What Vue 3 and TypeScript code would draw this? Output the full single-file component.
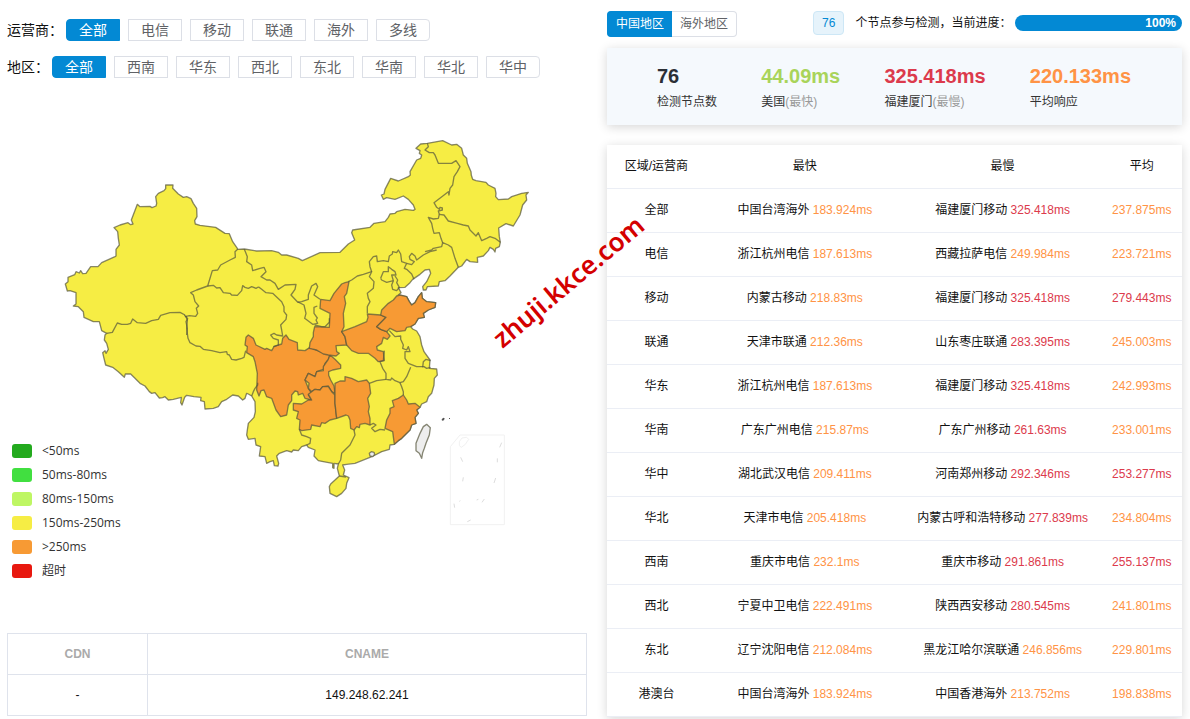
<script setup lang="ts">
import { ref } from 'vue'

type Point = [number, number]
interface Row { area: string; fast: string; fastMs: string; slow: string; slowMs: string; avg: string }

const carriers = ['全部', '电信', '移动', '联通', '海外', '多线']
const areas = ['全部', '西南', '华东', '西北', '东北', '华南', '华北', '华中']
const carrier = ref('全部')
const area = ref('全部')
const scope = ref('中国地区')

const stats = [
  { value: '76', label: '检测节点数', note: '', tone: 'dark' },
  { value: '44.09ms', label: '美国', note: '(最快)', tone: 'green' },
  { value: '325.418ms', label: '福建厦门', note: '(最慢)', tone: 'red' },
  { value: '220.133ms', label: '平均响应', note: '', tone: 'orange' },
]

const legend = [
  { label: '<50ms', level: 'l1' },
  { label: '50ms-80ms', level: 'l2' },
  { label: '80ms-150ms', level: 'l3' },
  { label: '150ms-250ms', level: 'l4' },
  { label: '>250ms', level: 'l5' },
  { label: '超时', level: 'l6' },
]

const rows: Row[] = [
  { area: '全部', fast: '中国台湾海外', fastMs: '183.924', slow: '福建厦门移动', slowMs: '325.418', avg: '237.875' },
  { area: '电信', fast: '浙江杭州电信', fastMs: '187.613', slow: '西藏拉萨电信', slowMs: '249.984', avg: '223.721' },
  { area: '移动', fast: '内蒙古移动', fastMs: '218.83', slow: '福建厦门移动', slowMs: '325.418', avg: '279.443' },
  { area: '联通', fast: '天津市联通', fastMs: '212.36', slow: '山东枣庄联通', slowMs: '283.395', avg: '245.003' },
  { area: '华东', fast: '浙江杭州电信', fastMs: '187.613', slow: '福建厦门移动', slowMs: '325.418', avg: '242.993' },
  { area: '华南', fast: '广东广州电信', fastMs: '215.87', slow: '广东广州移动', slowMs: '261.63', avg: '233.001' },
  { area: '华中', fast: '湖北武汉电信', fastMs: '209.411', slow: '河南郑州移动', slowMs: '292.346', avg: '253.277' },
  { area: '华北', fast: '天津市电信', fastMs: '205.418', slow: '内蒙古呼和浩特移动', slowMs: '277.839', avg: '234.804' },
  { area: '西南', fast: '重庆市电信', fastMs: '232.1', slow: '重庆市移动', slowMs: '291.861', avg: '255.137' },
  { area: '西北', fast: '宁夏中卫电信', fastMs: '222.491', slow: '陕西西安移动', slowMs: '280.545', avg: '241.801' },
  { area: '东北', fast: '辽宁沈阳电信', fastMs: '212.084', slow: '黑龙江哈尔滨联通', slowMs: '246.856', avg: '229.801' },
  { area: '港澳台', fast: '中国台湾海外', fastMs: '183.924', slow: '中国香港海外', slowMs: '213.752', avg: '198.838' },
]
const tone = (ms: string) => (Number(ms) > 250 ? 'red' : 'orange')

// Each map sheet has its own origin; outlines are stored relative to it.
const sheets: Record<string, Point> = {
  nw: [150, 510], mid: [690, 690], ne: [1110, 390], sw: [270, 930], se: [720, 990],
}
const on = (sheet: string, pts: string) =>
  pts.split(' ').map((p) => {
    const [x, y] = p.split(',').map(Number)
    return `${x + sheets[sheet][0]},${y + sheets[sheet][1]}`
  }).join(' ')

const outline = [
  on('nw', '46,342 54,335 54,322 74,314 78,305 88,309 92,302 98,311 108,310 122,290 144,290 155,278 195,260 198,258 198,238 208,225 205,205 203,185 192,173 210,165 234,158 242,164 249,162 244,150 262,103 270,110 300,109 306,113 318,108 320,100 317,80 325,70 342,62 347,56 347,45 369,45 368,55 385,72 400,82 410,80 423,86 430,100 440,115 441,140 434,152 436,162 450,166 497,172 525,190 538,191 548,215 562,235 563,238 583,237'),
  on('mid', '80,63 125,62 145,67 155,75 170,75 205,85 217,92 270,68 330,67 355,42 374,30 365,8 368,0'),
  on('ne', '0,292 12,280 45,275 55,262 60,252 75,250 80,245 105,238 130,241 135,238 130,225 115,208 100,198 75,208 50,203 40,208 34,195 42,192 45,178 62,145 85,153 115,140 121,135 120,125 140,90 152,85 155,75 148,70 150,62 138,55 152,42 172,40 218,32 245,45 260,43 275,55 280,75 290,85 292,100 303,125 304,136 308,148 318,152 348,157 355,165 375,175 378,190 377,200 385,209 415,207 425,200 455,190 475,187 468,195 470,210 458,225 450,255 430,288 408,281 386,294 388,320 391,337 388,350 377,355 375,366 370,358 360,352 355,362 340,378 322,382 323,397 300,395 290,388 275,408 265,412 240,438 225,452 208,455 205,468 172,470 168,480'),
  on('mid', '580,180 578,170 590,155 602,130 598,118 585,120 570,133 548,148 540,158 525,172 505,173 513,188 505,195 530,200 538,215 545,225 555,218 565,200 575,188 577,205 590,215 617,218 615,232 595,240 580,250 583,262 565,265 555,282 542,290 548,297 560,303 570,320 575,345'),
  on('se', '552,65 570,90 568,115 590,117 592,135 583,145 582,165 575,190 565,200 560,215 545,222 540,232 530,240 535,250 525,262 528,280 515,285 510,300 495,315 485,325 475,332 463,343 450,345 448,358 425,365 400,378 390,382 375,388 345,400 320,403 308,405 314,420 310,435 327,443 320,460 318,475 305,490 290,500 270,490 268,470 272,462 298,438 292,415 295,402 282,400 282,415 278,413 278,400 250,395 235,392 222,378 225,360 205,352 200,345 185,350 175,362 160,360 155,366 140,362 118,370 110,378 116,400 114,408 103,407 100,392 90,395 80,400 75,380 58,378 62,350 48,345 45,325 25,328 20,315 22,300 25,280 42,262 46,245 45,215'),
  on('sw', '485,258 475,252 470,250 465,265 458,270 445,258 428,255 410,268 395,275 385,290 370,295 345,297 343,275 332,272 333,262 312,260 290,256 284,262 276,285 272,278 274,262 250,268 235,270 225,260 218,263 208,264 195,248 185,250 178,245 165,228 150,220 135,205 122,192 106,192 103,202 85,185 68,172 47,165 42,145 38,128 45,122 48,130 55,118 50,100 43,90 45,75 50,70'),
  on('nw', '155,482 148,455 130,455 102,442 100,425 85,410 70,408 78,402 78,368 60,362 52,363'),
].join(' ')

const slowProvinces = [
  on('se', '18,22 25,15 40,25 48,45 75,58 80,55 95,62 102,50 115,45 125,42 128,25 138,15 147,28 172,38 173,60 195,62 210,52 240,65 270,75 265,88 255,100 250,118 230,125 225,140 205,130 195,150 205,175 215,190 205,195 215,210 195,205 188,190 175,195 173,185 165,183 155,195 155,212 145,225 140,255 122,260 108,240 95,205 80,200 72,180 63,182 57,198 50,180 52,130 45,95 40,80 20,68 22,50 15,45'),
  on('se', '270,75 285,88 302,105 302,115 278,120 266,125 266,136 272,150 282,168 285,190 275,185 265,168 248,170 240,180 225,178 215,185 205,175 207,160 195,150 205,130 225,140 230,125 250,122 250,110 265,88'),
  on('se', '160,220 185,222 205,210 215,210 205,193 225,178 240,180 248,170 265,170 275,185 285,195 285,220 290,265 270,270 255,280 245,278 240,290 215,285 212,298 185,302 178,298 180,270 170,265 175,245 160,240'),
  on('se', '285,160 300,153 315,153 315,140 335,145 355,155 380,150 388,160 392,190 383,205 388,230 385,245 390,265 390,285 375,280 360,283 358,293 350,290 342,300 332,295 330,270 325,258 318,255 290,265 285,220 285,190'),
  on('mid', '357,155 350,190 343,200 347,220 340,250 342,290 335,305 345,320 350,345 318,347 320,365 328,370 318,378 295,375 280,372 260,360 238,355 240,338 250,320 250,308 254,290 298,292 300,250 270,235 272,208 300,212 312,190 335,162 345,158'),
  on('mid', '412,252 452,255 468,262 455,275 440,290 452,298 470,305 480,318 472,328 460,322 455,340 440,350 442,360 460,365 463,392 445,395 435,385 415,370 385,370 365,362 350,345 345,320 335,305 375,290 410,275 414,262'),
  on('mid', '452,255 455,240 475,220 490,210 500,198 510,195 530,200 538,215 545,225 555,218 565,200 575,188 577,205 590,215 617,218 615,232 595,240 580,250 583,262 565,265 555,282 542,290 530,292 525,302 500,305 480,295 470,305 452,298 440,290 455,275 468,262'),
  on('se', '490,195 500,210 505,222 525,220 540,232 530,240 535,250 525,262 528,280 515,285 510,300 485,325 475,332 463,343 458,305 435,295 440,270 450,250 450,235 462,230 457,212 475,205'),
]

const borders = [
  on('nw', '170,490 187,487 202,459 215,463 232,463 242,460 248,447 262,458 287,460 305,452 325,448 332,436 360,428 390,427 405,435'),
  on('nw', '403,435 408,440 413,446 408,455 412,475 410,495'),
  on('sw', '287,18 292,30 290,55 294,85 300,98 318,108 330,109 340,118 365,122 390,128 410,125 412,133 418,135 425,148 438,150 455,145 462,142 467,122'),
  on('nw', '405,440 418,437 437,439 443,430 439,415 446,408 435,395 430,375 422,368 440,360 473,348 487,302 503,300 512,285 540,270 556,262 555,245 563,238'),
  on('nw', '473,348 490,346 500,354 510,353 520,368 540,370 545,375 562,376 575,362 578,347 585,352 595,355 605,350 618,355 625,351'),
  on('mid', '85,170 95,178 108,188 128,190 155,215 162,230 162,245 170,255 168,268 152,285 155,300 158,318 140,315 132,310 122,315 130,325 145,330 145,345 130,350'),
  on('mid', '43,58 52,80 50,95 65,105 68,122 90,115 102,112 108,125 93,140 110,150 120,150 135,160 145,178 165,165 198,163 195,178 183,195 202,215'),
  on('mid', '202,217 215,215 235,208 235,195 245,168 258,160 263,170 252,195 270,208'),
  on('mid', '202,215 222,225 228,250 224,265 248,283 263,280 258,270 262,264 252,250 252,232 262,228'),
  on('mid', '254,285 275,290 285,290 298,277 298,265'),
  on('mid', '355,155 365,150 382,138 400,133 425,125 418,140 432,155 430,175 412,190 415,205 420,215 412,230 412,250'),
  on('mid', '425,125 420,110 418,95 430,80 440,78 442,95 460,92 475,95 478,78 487,72 488,65 500,68 505,60 512,72 515,95 530,100 523,115 530,118 545,132 552,148'),
  on('mid', '530,100 545,104 553,95 540,88 538,80 545,70 555,78 560,90 580,75 600,65 620,60'),
  on('ne', '165,365 185,360 190,355 215,350 218,338 235,345 245,352 255,385 265,412'),
  on('ne', '218,338 213,325 208,308 192,310 188,295 185,280 175,262 190,267 205,265 208,253 222,255 235,273 262,280 280,285 295,288 300,300 318,318 325,308 335,332 350,325 360,320 375,325 391,337'),
  on('ne', '208,253 205,243 217,240 217,234 210,232 208,238 200,232 192,218 235,185 237,195 240,175 248,165 252,140 262,125 270,110 258,92 245,100 205,100 195,75 190,68 178,68 165,60 175,50 172,40'),
  on('mid', '452,145 460,125 475,125 475,110 485,118 495,125 498,135 485,135 490,152 470,157 455,150 452,145'),
  on('mid', '490,152 485,165 488,178 500,182 508,172 500,158 503,150 495,138'),
  on('mid', '478,302 495,320 512,318 512,328 520,345 518,355 530,360 535,350 540,365 525,365 525,385 535,400 560,410 582,410 590,415 602,412'),
  on('se', '433,62 430,92 420,95 428,115 438,130 438,148 452,150 455,144 465,152 480,158 490,155 500,140 512,112'),
  on('se', '548,112 550,95 558,88 572,92'),
  on('se', '388,160 410,152 438,148'),
  on('se', '480,158 485,170 490,185 490,195'),
  on('se', '390,285 400,280 408,285 395,295 405,305 420,298 435,300'),
  on('se', '342,300 345,315 330,345 305,370 302,390 295,402'),
  on('se', '178,298 185,315 200,320 212,325 210,340 200,345'),
  on('sw', '485,258 490,245 495,235 503,225 503,218'),
  on('se', '298,438 318,441'),
]
const taiwan = on('se', '560,283 571,293 568,315 558,340 553,355 548,368 545,385 538,370 528,362 528,340 540,310 550,290')
</script>

<template>
  <div class="page">
    <section class="left">
      <div class="filter">
        <span id="carrier-label">运营商：</span>
        <div class="options" role="group" aria-labelledby="carrier-label">
          <button v-for="c in carriers" :key="c" type="button" :class="{ active: carrier === c }" :aria-pressed="carrier === c" @click="carrier = c">{{ c }}</button>
        </div>
      </div>
      <div class="filter">
        <span id="area-label">地区：</span>
        <div class="options" role="group" aria-labelledby="area-label">
          <button v-for="a in areas" :key="a" type="button" :class="{ active: area === a }" :aria-pressed="area === a" @click="area = a">{{ a }}</button>
        </div>
      </div>

      <div class="map">
        <svg viewBox="21 234 1740 1665" aria-hidden="true">
          <g class="land">
            <polygon class="normal" :points="outline" />
            <polygon v-for="(p, i) in slowProvinces" :key="i" class="slow" :points="p" />
            <polyline v-for="(p, i) in borders" :key="i" :points="p" />
            <polygon class="none" :points="taiwan" />
            <path class="none" d="M1108 1360l6-5 8 2 2 6-6 7-8-2z" />
          </g>
          <path class="islet" d="M1325 1258l5-5 4 2-2 6-6 1zM1347 1254h3v3h-3z" />
          <g class="inset">
            <path d="M1380 1305h133v269h-162v-234z" />
            <path d="M1378 1325l8-11 14-2 6 6-10 15-12 9-6-5z" />
            <path class="dash" d="M1505 1328l-6 14M1382 1372l6 13M1492 1375v12M1390 1432l-2 12M1487 1434l-5 15M1362 1511l2 12M1378 1504l3-2M1430 1500l5-2M1446 1507l7-10M1402 1565l10-5" />
          </g>
        </svg>
        <ul class="legend">
          <li v-for="l in legend" :key="l.level"><i :class="l.level"></i>{{ l.label }}</li>
        </ul>
      </div>

      <table class="cname">
        <thead><tr><th class="cdn">CDN</th><th>CNAME</th></tr></thead>
        <tbody><tr><td>-</td><td>149.248.62.241</td></tr></tbody>
      </table>
    </section>

    <section class="right">
      <div class="bar">
        <div class="tabs">
          <button v-for="s in ['中国地区', '海外地区']" :key="s" type="button" :class="{ active: scope === s }" :aria-pressed="scope === s" @click="scope = s">{{ s }}</button>
        </div>
        <span class="tag">76</span>
        <span class="status">个节点参与检测，当前进度：</span>
        <div class="progress" role="progressbar" aria-valuenow="100" aria-label="当前进度">100%</div>
      </div>

      <div class="stats">
        <div v-for="s in stats" :key="s.label">
          <strong :class="s.tone">{{ s.value }}</strong>
          <p>{{ s.label }}<span>{{ s.note }}</span></p>
        </div>
      </div>

      <table class="results">
        <colgroup><col class="c1"><col class="c2"><col class="c2"><col></colgroup>
        <thead><tr><th>区域/运营商</th><th>最快</th><th>最慢</th><th>平均</th></tr></thead>
        <tbody>
          <tr v-for="r in rows" :key="r.area">
            <td>{{ r.area }}</td>
            <td>{{ r.fast }} <span :class="tone(r.fastMs)">{{ r.fastMs }}ms</span></td>
            <td>{{ r.slow }} <span :class="tone(r.slowMs)">{{ r.slowMs }}ms</span></td>
            <td><span :class="tone(r.avg)">{{ r.avg }}ms</span></td>
          </tr>
        </tbody>
      </table>
    </section>

    <div class="watermark">zhuji.kkce.com</div>
  </div>
</template>

<style>
body { margin: 0; background: #fff; }
</style>

<style scoped>
.page {
  position: relative;
  display: grid;
  grid-template-columns: 580fr 575fr;
  gap: 20px;
  align-items: start;
  padding: 11px 8px 2px 7px;
  overflow: hidden;
  font: 12px/18px "Liberation Sans", "Noto Sans CJK SC", sans-serif;
  color: #111;
}
button { font-family: inherit; cursor: pointer; margin: 0; }
.left { padding-top: 8px; }
.filter { display: flex; align-items: center; gap: 3px; height: 22px; margin-bottom: 15px; font-size: 14px; }
.filter + .filter { margin-bottom: 0; }
.options { display: flex; gap: 8px; }
.options button {
  box-sizing: border-box;
  width: 54px;
  height: 22px;
  padding: 0;
  border: 1px solid #dcdfe6;
  background: #fff;
  color: #606266;
  font-size: 14px;
  line-height: 20px;
}
.options button:first-child { border-radius: 4px 0 0 4px; }
.options button:last-child { border-radius: 0 4px 4px 0; }
.options button.active, .tabs button.active { background: #0389d4; border-color: #0389d4; color: #fff; }

.map { position: relative; }
.map svg { display: block; width: 100%; height: auto; }
.land { stroke: #55553c; stroke-opacity: .7; stroke-width: 4; stroke-linejoin: round; fill: none; }
.normal { fill: #f6ed44; }
.slow { fill: #f79a34; }
.none { fill: #eee; }
.islet { fill: #555; }
.inset { fill: none; stroke: #f1f1f1; stroke-width: 3; }
.dash { stroke: #ddd; }
.legend { position: absolute; left: 5px; bottom: 50px; margin: 0; padding: 0; list-style: none; }
.legend li { display: flex; align-items: center; gap: 10px; height: 24px; color: #333; font: 12px/22px "Open Sans", "Noto Sans CJK SC", sans-serif; }
.legend i { width: 20px; height: 14px; border-radius: 3px; }
.l1 { background: #23aa1e; }
.l2 { background: #41df40; }
.l3 { background: #bef663; }
.l4 { background: #f6ed44; }
.l5 { background: #f79a34; }
.l6 { background: #e8180f; }

table { width: 100%; border-collapse: collapse; table-layout: fixed; text-align: center; }
.cname th, .cname td { height: 40px; padding: 0; border: 1px solid #dfe3ec; }
.cname th { color: #aaa; }
.cname .cdn { width: 139px; }

.bar { display: flex; align-items: center; height: 26px; }
.tabs { display: flex; margin-right: 76px; }
.tabs button { box-sizing: border-box; height: 26px; padding: 0 8px; border: 1px solid #dcdfe6; background: #fff; color: #606266; font-size: 12px; line-height: 24px; }
.tabs button:first-child { border-radius: 4px 0 0 4px; border-right: 0; }
.tabs button:last-child { border-radius: 0 4px 4px 0; border-left: 0; }
.tag { box-sizing: border-box; height: 24px; margin-bottom: 2px; padding: 0 8px; border: 1px solid #cde7f6; border-radius: 4px; background: #e6f3fb; color: #0389d4; line-height: 22px; }
.status { margin: 0 4px 2px 11px; white-space: nowrap; }
.progress { flex: 1; height: 16px; margin-bottom: 2px; padding-right: 6px; border-radius: 8px; background: #0389d4; color: #fff; font-weight: bold; line-height: 17px; text-align: right; }

.stats {
  display: flex;
  justify-content: space-between;
  margin-top: 11px;
  padding: 16px 51px 14px 50px;
  background: #f5f9fd;
  box-shadow: 0 2px 10px rgba(0, 0, 0, .16);
}
.stats strong { display: block; font-size: 20px; line-height: 24px; }
.stats p { margin: 5px 0 0; color: #333; }
.stats p span { color: #999; }
.dark { color: #2b2f36; }
.green { color: #a9d45a; }
.red { color: #dc3a4c; }
.orange { color: #ff9345; }

.results { margin-top: 20px; background: #fff; box-shadow: 0 2px 10px rgba(0, 0, 0, .16); }
.results th, .results td { height: 41px; padding: 0 0 2px; border-bottom: 1px solid #ebeef5; font-weight: normal; white-space: nowrap; }
.c1 { width: 17.2%; }
.c2 { width: 34.4%; }

.watermark {
  position: absolute;
  left: 568px;
  top: 281px;
  transform: translate(-50%, -50%) rotate(-40deg);
  color: #d40000;
  font: 600 26px/32px "Noto Sans", sans-serif;
  white-space: nowrap;
  pointer-events: none;
}
</style>
